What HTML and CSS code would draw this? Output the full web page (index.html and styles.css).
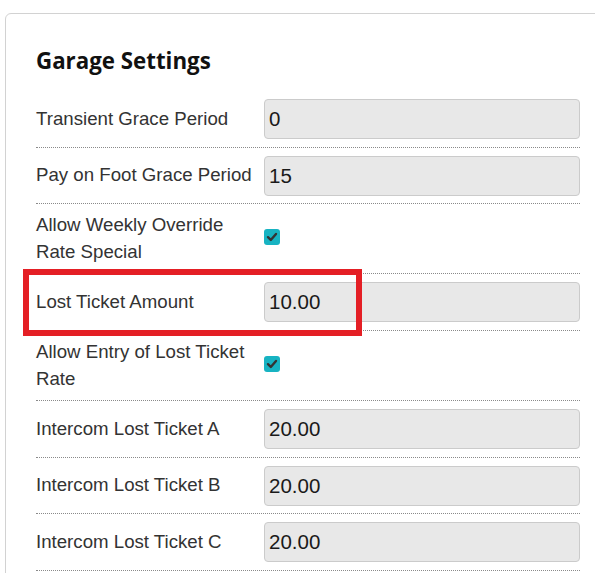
FILE: index.html
```html
<!DOCTYPE html>
<html>
<head>
<meta charset="utf-8">
<link rel="stylesheet" href="styles.css">
</head>
<body>
<div class="card">
  <h2 class="title">Garage Settings</h2>
  <div class="row">
    <div class="label">Transient Grace Period</div>
    <div class="field"><div class="input">0</div></div>
  </div>
  <div class="row">
    <div class="label">Pay on Foot Grace Period</div>
    <div class="field"><div class="input">15</div></div>
  </div>
  <div class="row">
    <div class="label">Allow Weekly Override Rate Special</div>
    <div class="field"><span class="check"><svg viewBox="0 0 16 16" width="16" height="16"><path d="M4 8.2 L6.8 11 L12 5" fill="none" stroke="#333" stroke-width="2.4" stroke-linecap="round" stroke-linejoin="round"/></svg></span></div>
  </div>
  <div class="row highlighted">
    <div class="label">Lost Ticket Amount</div>
    <div class="field"><div class="input">10.00</div></div>
    <div class="mark"></div>
  </div>
  <div class="row">
    <div class="label">Allow Entry of Lost Ticket Rate</div>
    <div class="field"><span class="check"><svg viewBox="0 0 16 16" width="16" height="16"><path d="M4 8.2 L6.8 11 L12 5" fill="none" stroke="#333" stroke-width="2.4" stroke-linecap="round" stroke-linejoin="round"/></svg></span></div>
  </div>
  <div class="row">
    <div class="label">Intercom Lost Ticket A</div>
    <div class="field"><div class="input">20.00</div></div>
  </div>
  <div class="row">
    <div class="label">Intercom Lost Ticket B</div>
    <div class="field"><div class="input">20.00</div></div>
  </div>
  <div class="row">
    <div class="label">Intercom Lost Ticket C</div>
    <div class="field"><div class="input">20.00</div></div>
  </div>
</div>
</body>
</html>
```
FILE: styles.css
```css
html, body {
  margin: 0;
  padding: 0;
  background: #fff;
  overflow: hidden;
}
body {
  width: 595px;
  height: 573px;
  font-family: "Liberation Sans", Arial, sans-serif;
}
.card {
  margin: 13px 0 0 5px;
  width: 620px;
  border: 1px solid #d2d2d2;
  border-radius: 6px;
  padding: 34px 0 40px 30px;
  box-sizing: border-box;
}
.title {
  margin: 0 0 18px 0;
  font-family: "Open Sans", sans-serif;
  font-weight: 700;
  font-size: 22.3px;
  line-height: 25px;
  color: #111;
}
.row {
  position: relative;
  width: 544px;
  display: grid;
  grid-template-columns: 228px 1fr;
  align-items: center;
  padding: 8px 0 7.67px 0;
  border-bottom: 1px dotted #8a8a8a;
}
.label {
  font-size: 18.67px;
  line-height: 26.67px;
  color: #333;
  padding-right: 12px;
}
.field {
  display: flex;
  align-items: center;
}
.input {
  box-sizing: border-box;
  width: 316px;
  height: 40px;
  background: #e8e8e8;
  border: 1px solid #cbcbcb;
  border-radius: 4px;
  padding: 0 4px;
  font-size: 20.5px;
  line-height: 38px;
  color: #1a1a1a;
}
.check {
  display: block;
  width: 16px;
  height: 16px;
  border-radius: 3px;
  background: #17b3c2;
  margin-top: -3px;
}
.check svg {
  display: block;
}
.mark {
  position: absolute;
  left: -13.5px;
  top: -5px;
  width: 339.5px;
  height: 67px;
  box-sizing: border-box;
  border: 6px solid #e41f25;
  pointer-events: none;
}
```
